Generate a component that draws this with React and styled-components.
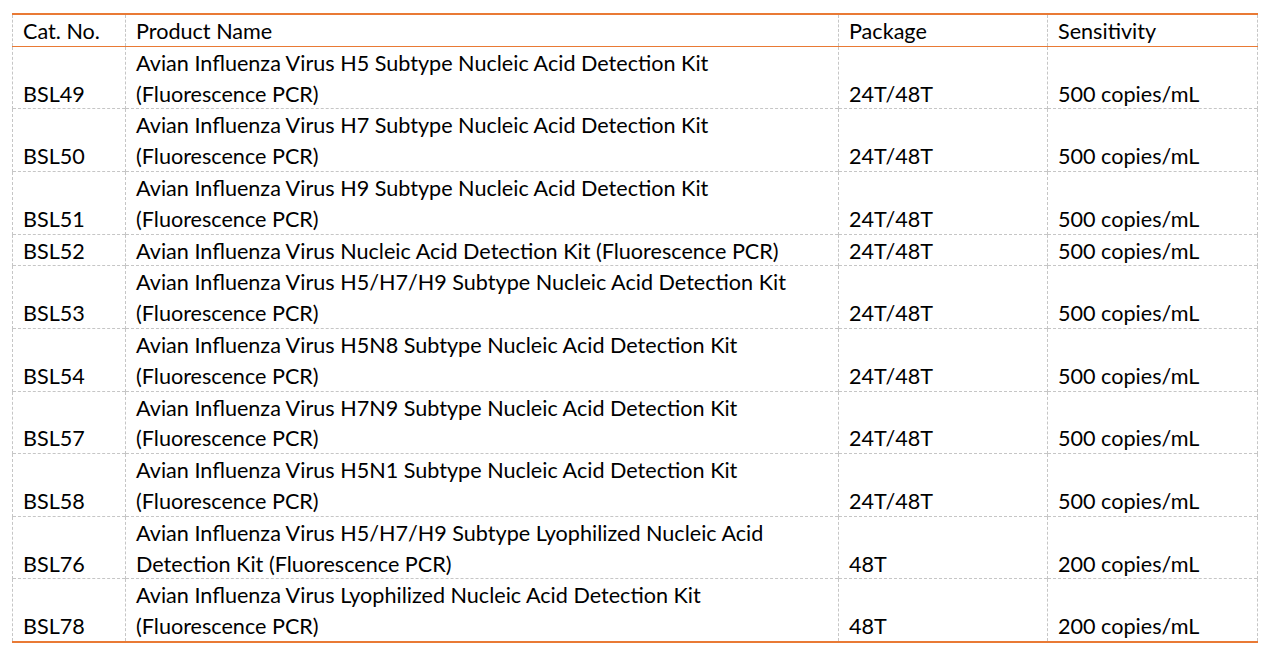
import styled, { createGlobalStyle } from "styled-components";

const GlobalStyle = createGlobalStyle`
  body {
    margin: 0;
    background: #fff;
    font-family: Lato, "Liberation Sans", sans-serif;
  }
`;

const PRODUCTS = [
  { no: "BSL49", name: ["Avian Influenza Virus H5 Subtype Nucleic Acid Detection Kit", "(Fluorescence PCR)"], pkg: "24T/48T", sens: "500 copies/mL" },
  { no: "BSL50", name: ["Avian Influenza Virus H7 Subtype Nucleic Acid Detection Kit", "(Fluorescence PCR)"], pkg: "24T/48T", sens: "500 copies/mL" },
  { no: "BSL51", name: ["Avian Influenza Virus H9 Subtype Nucleic Acid Detection Kit", "(Fluorescence PCR)"], pkg: "24T/48T", sens: "500 copies/mL" },
  { no: "BSL52", name: ["Avian Influenza Virus Nucleic Acid Detection Kit (Fluorescence PCR)"], pkg: "24T/48T", sens: "500 copies/mL" },
  { no: "BSL53", name: ["Avian Influenza Virus H5/H7/H9 Subtype Nucleic Acid Detection Kit", "(Fluorescence PCR)"], pkg: "24T/48T", sens: "500 copies/mL" },
  { no: "BSL54", name: ["Avian Influenza Virus H5N8 Subtype Nucleic Acid Detection Kit", "(Fluorescence PCR)"], pkg: "24T/48T", sens: "500 copies/mL" },
  { no: "BSL57", name: ["Avian Influenza Virus H7N9 Subtype Nucleic Acid Detection Kit", "(Fluorescence PCR)"], pkg: "24T/48T", sens: "500 copies/mL" },
  { no: "BSL58", name: ["Avian Influenza Virus H5N1 Subtype Nucleic Acid Detection Kit", "(Fluorescence PCR)"], pkg: "24T/48T", sens: "500 copies/mL" },
  { no: "BSL76", name: ["Avian Influenza Virus H5/H7/H9 Subtype Lyophilized Nucleic Acid", "Detection Kit (Fluorescence PCR)"], pkg: "48T", sens: "200 copies/mL" },
  { no: "BSL78", name: ["Avian Influenza Virus Lyophilized Nucleic Acid Detection Kit", "(Fluorescence PCR)"], pkg: "48T", sens: "200 copies/mL" },
];

const Page = styled.div`
  padding: 13px 10px 0 12px;
`;

const Table = styled.table`
  width: 1245px;
  border-collapse: collapse;
  table-layout: fixed;
  border-top: 2px solid #e97a35;
  border-bottom: 2px solid #e97a35;
  color: #000;
  font-size: 21.6px;
`;

const HeadRow = styled.tr`
  border-bottom: 1px solid #e97a35;
`;

const Row = styled.tr`
  border-bottom: 1px dashed #c6c6c6;
  &:last-child {
    border-bottom: none;
  }
`;

const Cell = styled.td`
  border-left: 1px dashed #c6c6c6;
  border-right: 1px dashed #c6c6c6;
  padding: 0 10px;
  vertical-align: bottom;
  white-space: nowrap;
`;

const HeadCell = styled(Cell).attrs({ as: "th" })`
  font-weight: normal;
  text-align: left;
`;

// line box is a little taller than the slot so glyphs sit slightly lower
const Line = styled.div`
  height: 30.8px;
  line-height: 32.6px;
`;

export default function App() {
  return (
    <Page>
      <GlobalStyle />
      <Table>
        <colgroup>
          <col style={{ width: 113 }} />
          <col style={{ width: 713 }} />
          <col style={{ width: 209 }} />
          <col style={{ width: 210 }} />
        </colgroup>
        <thead>
          <HeadRow>
            <HeadCell><Line>Cat. No.</Line></HeadCell>
            <HeadCell><Line>Product Name</Line></HeadCell>
            <HeadCell><Line>Package</Line></HeadCell>
            <HeadCell><Line>Sensitivity</Line></HeadCell>
          </HeadRow>
        </thead>
        <tbody>
          {PRODUCTS.map((p) => (
            <Row key={p.no}>
              <Cell><Line>{p.no}</Line></Cell>
              <Cell>
                {p.name.map((line) => (
                  <Line key={line}>{line}</Line>
                ))}
              </Cell>
              <Cell><Line>{p.pkg}</Line></Cell>
              <Cell><Line>{p.sens}</Line></Cell>
            </Row>
          ))}
        </tbody>
      </Table>
    </Page>
  );
}
